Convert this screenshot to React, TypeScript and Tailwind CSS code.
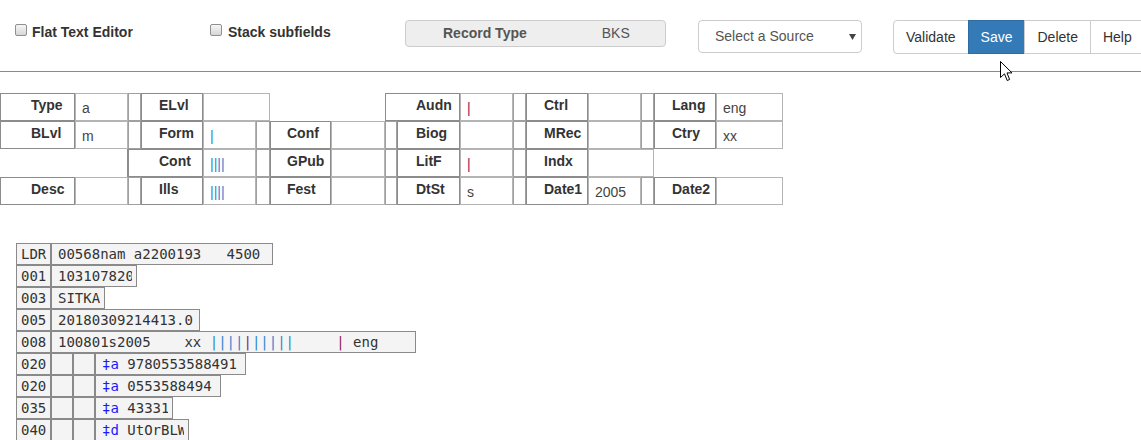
import React from 'react';

type Cell =
  | { k: 'L'; w: string; t: string }
  | { k: 'I'; w: string; v?: string; c?: string }
  | { k: 'S'; w: string }
  | { k: 'G'; w: string }
  | { k: 'B'; w: string };

const BLUE = 'text-[#2f86d0]';
const MAROON = 'text-[#8e1f55]';

const ffRows: Cell[][] = [
  [
    { k: 'L', w: 'w-[75px]', t: 'Type' },
    { k: 'I', w: 'w-[53px]', v: 'a' },
    { k: 'S', w: 'w-[13px]' },
    { k: 'L', w: 'w-[62px]', t: 'ELvl' },
    { k: 'I', w: 'w-[67px]' },
    { k: 'G', w: 'w-[115px]' },
    { k: 'L', w: 'w-[75px]', t: 'Audn' },
    { k: 'I', w: 'w-[53px]', v: '|', c: MAROON },
    { k: 'S', w: 'w-[13px]' },
    { k: 'L', w: 'w-[62px]', t: 'Ctrl' },
    { k: 'I', w: 'w-[53px]' },
    { k: 'S', w: 'w-[13px]' },
    { k: 'L', w: 'w-[62px]', t: 'Lang' },
    { k: 'I', w: 'w-[67px]', v: 'eng' },
  ],
  [
    { k: 'L', w: 'w-[75px]', t: 'BLvl' },
    { k: 'I', w: 'w-[53px]', v: 'm' },
    { k: 'S', w: 'w-[13px]' },
    { k: 'L', w: 'w-[62px]', t: 'Form' },
    { k: 'I', w: 'w-[53px]', v: '|', c: BLUE },
    { k: 'S', w: 'w-[14px]' },
    { k: 'L', w: 'w-[61px]', t: 'Conf' },
    { k: 'I', w: 'w-[54px]' },
    { k: 'S', w: 'w-[12px]' },
    { k: 'L', w: 'w-[63px]', t: 'Biog' },
    { k: 'I', w: 'w-[53px]' },
    { k: 'S', w: 'w-[13px]' },
    { k: 'L', w: 'w-[62px]', t: 'MRec' },
    { k: 'I', w: 'w-[53px]' },
    { k: 'S', w: 'w-[13px]' },
    { k: 'L', w: 'w-[62px]', t: 'Ctry' },
    { k: 'I', w: 'w-[67px]', v: 'xx' },
  ],
  [
    { k: 'B', w: 'w-[128px]' },
    { k: 'L', w: 'w-[75px]', t: 'Cont' },
    { k: 'I', w: 'w-[53px]', v: '||||', c: BLUE },
    { k: 'S', w: 'w-[14px]' },
    { k: 'L', w: 'w-[61px]', t: 'GPub' },
    { k: 'I', w: 'w-[54px]' },
    { k: 'S', w: 'w-[12px]' },
    { k: 'L', w: 'w-[63px]', t: 'LitF' },
    { k: 'I', w: 'w-[53px]', v: '|', c: MAROON },
    { k: 'S', w: 'w-[13px]' },
    { k: 'L', w: 'w-[62px]', t: 'Indx' },
    { k: 'I', w: 'w-[66px]' },
  ],
  [
    { k: 'L', w: 'w-[75px]', t: 'Desc' },
    { k: 'I', w: 'w-[53px]' },
    { k: 'S', w: 'w-[13px]' },
    { k: 'L', w: 'w-[62px]', t: 'Ills' },
    { k: 'I', w: 'w-[53px]', v: '||||', c: BLUE },
    { k: 'S', w: 'w-[14px]' },
    { k: 'L', w: 'w-[61px]', t: 'Fest' },
    { k: 'I', w: 'w-[54px]' },
    { k: 'S', w: 'w-[12px]' },
    { k: 'L', w: 'w-[63px]', t: 'DtSt' },
    { k: 'I', w: 'w-[53px]', v: 's' },
    { k: 'S', w: 'w-[13px]' },
    { k: 'L', w: 'w-[62px]', t: 'Date1' },
    { k: 'I', w: 'w-[53px]', v: '2005' },
    { k: 'S', w: 'w-[13px]' },
    { k: 'L', w: 'w-[62px]', t: 'Date2' },
    { k: 'I', w: 'w-[67px]' },
  ],
];

function FFCell({ cell }: { cell: Cell }) {
  if (cell.k === 'L')
    return (
      <div className={`${cell.w} h-[28px] shrink-0 border border-[#8c8c8c] flex justify-end`}>
        <span className="w-[43px] shrink-0 text-[14px] font-bold leading-[20px] pt-[1px] text-[#333] whitespace-nowrap">
          {cell.t}
        </span>
      </div>
    );
  if (cell.k === 'I')
    return (
      <div
        className={`${cell.w} h-[28px] shrink-0 border border-[#b4b4b4] bg-white pl-[6px] pt-[3px] flex items-center text-[14px] whitespace-pre ${
          cell.c ?? 'text-[#444]'
        }`}
      >
        {cell.v ?? ''}
      </div>
    );
  if (cell.k === 'S') return <div className={`${cell.w} h-[28px] shrink-0 border border-[#a0a0a0]`} />;
  if (cell.k === 'B') return <div className={`${cell.w} h-[28px] shrink-0 border-r border-[#8c8c8c]`} />;
  return <div className={`${cell.w} h-[28px] shrink-0`} />;
}

const mono = "font-['DejaVu_Sans_Mono',monospace] text-[14px] leading-[20px]";
const cellBase = 'h-[22px] shrink-0 border border-[#8a8a8a] bg-[#f4f4f4] text-[#333]';

type Seg = { t: string; c?: string };

function MarcRow({ tag, w, segs, ind }: { tag: string; w: string; segs: Seg[]; ind?: boolean }) {
  return (
    <div className="flex">
      <div className={`${cellBase} w-[35px] pl-[4px] ${mono}`}>{tag}</div>
      {ind && (
        <>
          <div className={`${cellBase} w-[22px]`} />
          <div className={`${cellBase} w-[22px]`} />
        </>
      )}
      <div className={`${cellBase} ${w} pl-[6px] pr-[4px] ${mono}`}>
        <div className="overflow-hidden whitespace-pre">
          {segs.map((s, i) => (
            <span key={i} className={s.c}>
              {s.t}
            </span>
          ))}
        </div>
      </div>
    </div>
  );
}

function Checkbox() {
  return (
    <span className="inline-block w-[12px] h-[12px] shrink-0 rounded-[2px] border border-[#8f8f8f] bg-gradient-to-b from-[#f6f6f6] to-[#d6d6d6]" />
  );
}

const DELIM = 'text-[#1a1aff]';

export default function App() {
  return (
    <div className="relative w-[1141px] h-[440px] overflow-hidden bg-white text-[#333] font-['Liberation_Sans',Arial,sans-serif]">
      {/* Top bar */}
      <div className="h-[72px] border-b border-[#8a8a8a] flex items-start">
        <div className="ml-[15px] mt-[24px] w-[195px] flex items-start gap-[5px] shrink-0">
          <Checkbox />
          <span className="text-[14px] font-bold leading-[16px] text-[#333]">Flat Text Editor</span>
        </div>
        <div className="mt-[24px] w-[195px] flex items-start gap-[6px] shrink-0">
          <Checkbox />
          <span className="text-[14px] font-bold leading-[16px] text-[#333]">Stack subfields</span>
        </div>
        <div className="mt-[20px] w-[261px] h-[27px] shrink-0 rounded-[4px] border border-[#cccccc] bg-[#eeeeee] flex items-center text-[14px] text-[#555]">
          <span className="pl-[37px] font-bold">Record Type</span>
          <span className="ml-[75px]">BKS</span>
        </div>
        <div className="ml-[32px] mt-[20px] w-[164px] h-[33px] shrink-0 rounded-[4px] border border-[#cccccc] bg-white flex items-center justify-between pl-[16px] pr-[5px] text-[14px] text-[#555]">
          <span>Select a Source</span>
          <svg width="7" height="6" viewBox="0 0 7 6" className="mt-[1px]">
            <path d="M0 0 L7 0 L3.5 6 Z" fill="#444" />
          </svg>
        </div>
        <div className="ml-[31px] mt-[20px] flex shrink-0 text-[14px] h-[34px]">
          <div className="px-[12px] flex items-center border border-[#cccccc] rounded-l-[4px] bg-white text-[#333]">
            Validate
          </div>
          <div className="px-[12px] flex items-center border border-[#2e6da4] bg-[#337ab7] text-white -ml-px">Save</div>
          <div className="px-[12px] flex items-center border border-[#cccccc] bg-white text-[#333] -ml-px">Delete</div>
          <div className="px-[12px] flex items-center border border-[#cccccc] bg-white text-[#333] -ml-px">Help</div>
        </div>
      </div>

      {/* Fixed fields */}
      <div className="mt-[21px] flex flex-col">
        {ffRows.map((row, i) => (
          <div key={i} className="flex">
            {row.map((c, j) => (
              <FFCell key={j} cell={c} />
            ))}
          </div>
        ))}
      </div>

      {/* MARC fields */}
      <div className="mt-[38px] ml-[16px] flex flex-col">
        <MarcRow tag="LDR" w="w-[222px]" segs={[{ t: '00568nam a2200193   4500' }]} />
        <MarcRow tag="001" w="w-[86px]" segs={[{ t: '103107820' }]} />
        <MarcRow tag="003" w="w-[54px]" segs={[{ t: 'SITKA' }]} />
        <MarcRow tag="005" w="w-[149px]" segs={[{ t: '20180309214413.0' }]} />
        <MarcRow
          tag="008"
          w="w-[365px]"
          segs={[
            { t: '100801s2005    xx ' },
            { t: '||||', c: 'text-[#2f86d0]' },
            { t: '|', c: 'text-[#8e1f55]' },
            { t: '|||||', c: 'text-[#2f86d0]' },
            { t: '     ' },
            { t: '|', c: 'text-[#8e1f55]' },
            { t: ' eng' },
          ]}
        />
        <MarcRow tag="020" ind w="w-[151px]" segs={[{ t: '‡a', c: DELIM }, { t: ' 9780553588491' }]} />
        <MarcRow tag="020" ind w="w-[126px]" segs={[{ t: '‡a', c: DELIM }, { t: ' 0553588494' }]} />
        <MarcRow tag="035" ind w="w-[78px]" segs={[{ t: '‡a', c: DELIM }, { t: ' 43331' }]} />
        <MarcRow tag="040" ind w="w-[94px]" segs={[{ t: '‡d', c: DELIM }, { t: ' UtOrBLW' }]} />
      </div>

      {/* Mouse cursor */}
      <svg className="absolute left-[1000px] top-[61px]" width="13" height="21" viewBox="0 0 13 21">
        <path
          d="M0.5 0.5 L0.5 16.5 L4.5 12.8 L7.2 19.5 L9.6 18.5 L7 11.9 L12 11.9 Z"
          fill="white"
          stroke="black"
          strokeWidth="1"
          strokeLinejoin="miter"
        />
      </svg>
    </div>
  );
}
